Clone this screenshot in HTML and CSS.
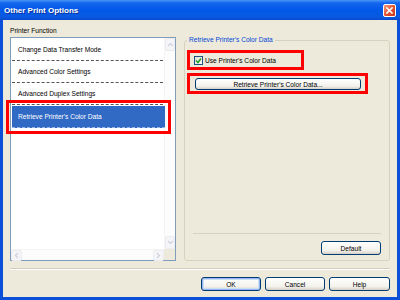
FILE: index.html
```html
<!DOCTYPE html>
<html lang="en">
<head>
    <meta charset="UTF-8">
    <title>Other Print Options</title>
    <link rel="stylesheet" href="styles.css">
</head>
<body>
    <div class="window">
        <div class="titlebar">
            <span class="title">Other Print Options</span>
            <span class="close">
                <svg width="7" height="7" viewBox="0 0 7 7"><path d="M1 1L6 6M6 1L1 6" stroke="#fff" stroke-width="1.6" stroke-linecap="square"/></svg>
            </span>
        </div>

        <div class="content">
            <div class="main">
                <div class="left">
                    <div class="label">Printer Function</div>
                    <div class="listbox">
                        <ul class="items">
                            <li>Change Data Transfer Mode</li>
                            <li>Advanced Color Settings</li>
                            <li>Advanced Duplex Settings</li>
                            <li class="selected">Retrieve Printer's Color Data</li>
                        </ul>
                        <div class="vscroll">
                            <span class="arrow"><svg width="7" height="5" viewBox="0 0 7 5"><path d="M1 4L3.5 1.5L6 4" fill="none" stroke="#cdd2dc" stroke-width="1.2"/></svg></span>
                            <span class="arrow"><svg width="7" height="5" viewBox="0 0 7 5"><path d="M1 1L3.5 3.5L6 1" fill="none" stroke="#cdd2dc" stroke-width="1.2"/></svg></span>
                        </div>
                        <div class="hscroll">
                            <span class="arrow"><svg width="5" height="7" viewBox="0 0 5 7"><path d="M4 1L1.5 3.5L4 6" fill="none" stroke="#cdd2dc" stroke-width="1.2"/></svg></span>
                            <span class="arrow"><svg width="5" height="7" viewBox="0 0 5 7"><path d="M1 1L3.5 3.5L1 6" fill="none" stroke="#cdd2dc" stroke-width="1.2"/></svg></span>
                        </div>
                        <div class="corner"></div>
                    </div>
                </div>

                <fieldset class="group">
                    <legend>Retrieve Printer's Color Data</legend>
                    <div class="mark mark-check">
                        <label class="check">
                            <span class="box">
                                <svg width="7" height="7" viewBox="0 0 7 7"><path d="M1 3.5L3 5.5L6 1.5" fill="none" stroke="#21a121" stroke-width="1.5"/></svg>
                            </span>
                            Use Printer's Color Data
                        </label>
                    </div>
                    <div class="mark mark-button">
                        <button class="btn btn-wide">Retrieve Printer's Color Data...</button>
                    </div>
                    <div class="group-foot">
                        <button class="btn">Default</button>
                    </div>
                </fieldset>
            </div>

            <div class="separator"></div>

            <div class="actions">
                <button class="btn btn-default">OK</button>
                <button class="btn">Cancel</button>
                <button class="btn">Help</button>
            </div>
        </div>
    </div>
</body>
</html>
```

FILE: styles.css
```css
* {
    margin: 0;
    padding: 0;
    box-sizing: border-box;
    font-family: 'Liberation Sans', Arial, sans-serif;
}

body {
    width: 400px;
    height: 300px;
    overflow: hidden;
    background-color: #eeeadb;
}

.window {
    width: 400px;
    height: 300px;
    display: flex;
    flex-direction: column;
    font-size: 6.6px;
    color: #000;
}

/* title bar */
.titlebar {
    height: 20px;
    flex-shrink: 0;
    display: flex;
    align-items: center;
    justify-content: space-between;
    padding: 0 4px 0 4px;
    background: linear-gradient(#4a96f7 0, #1466ee 3px, #0058e8 50%, #0a5ae0 85%, #0848cc 100%);
}

.title {
    color: #fff;
    font-weight: bold;
    font-size: 8px;
    text-shadow: 1px 1px 0 #0b2f9a;
}

.close {
    width: 13px;
    height: 13px;
    border: 1px solid #fff;
    border-radius: 2px;
    background: linear-gradient(135deg, #f39a7c, #e0502f 55%, #c8391d);
    display: flex;
    align-items: center;
    justify-content: center;
}

/* window body */
.content {
    flex: 1;
    display: flex;
    flex-direction: column;
    padding: 5px 7px 0 7px;
    border: 3px solid #0a4fd8;
    border-top: none;
    background-color: #eeeadb;
}

.main {
    display: flex;
    gap: 8px;
}

.left {
    width: 166px;
    display: flex;
    flex-direction: column;
}

.label {
    height: 12px;
    line-height: 12px;
}

/* list box */
.listbox {
    height: 224px;
    border: 1px solid #7f9db9;
    background-color: #fff;
    display: grid;
    grid-template-columns: 1fr 11px;
    grid-template-rows: 1fr 11px;
}

.items {
    list-style: none;
    padding-top: 1px;
}

.items li {
    height: 22px;
    line-height: 21px;
    margin: 0 1px;
    padding-left: 6px;
    border-bottom: 1px dashed #555;
}

.items li.selected {
    position: relative;
    z-index: 1;
    margin-right: -1px;
    background-color: #316ac5;
    color: #fff;
    border-bottom: 1px dashed #9cb4e2;
    margin-top: 1px;
    outline: 3px solid #f00;
    outline-offset: 3px;
}

.vscroll {
    display: flex;
    flex-direction: column;
    justify-content: space-between;
    background-color: #fdfcfc;
    border-left: 1px solid #f6f3f3;
}

.hscroll {
    display: flex;
    justify-content: space-between;
    background-color: #fdfcfc;
    border-top: 1px solid #f6f3f3;
}

.arrow {
    width: 11px;
    height: 11px;
    display: flex;
    align-items: center;
    justify-content: center;
    background-color: #f5f5f8;
    border: 1px solid #eaecf2;
    border-radius: 2px;
}

.vscroll .arrow {
    width: 10px;
    height: 13px;
}

.corner {
    background-color: #eeeadb;
}

/* group box */
.group {
    flex: 1;
    margin-top: 10px;
    border: 1px solid #d5d2c0;
    border-radius: 3px;
    padding: 0 2px 5px 2px;
    display: flex;
    flex-direction: column;
}

.group legend {
    padding: 0 2px;
    line-height: 10px;
    color: #0046d5;
}

.mark {
    border: 3px solid #f00;
}

.mark-check {
    width: 117px;
    height: 20px;
    margin-top: 5px;
    padding: 0 4px;
    display: flex;
    align-items: center;
}

.check {
    display: flex;
    align-items: center;
    gap: 2px;
}

.box {
    width: 9px;
    height: 9px;
    border: 1px solid #1c5180;
    background: linear-gradient(135deg, #dcdcd7, #fff);
    display: flex;
    align-items: center;
    justify-content: center;
}

.mark-button {
    width: 181px;
    height: 21px;
    margin-top: 3px;
    padding: 2px 4px 0 5px;
}

.group-foot {
    margin: auto 6px 0 6px;
    padding-top: 7px;
    border-top: 1px solid #d5d2c0;
    display: flex;
    justify-content: flex-end;
}

/* buttons */
.btn {
    width: 60px;
    height: 14px;
    font-size: 6.6px;
    color: #000;
    border: 1px solid #003c74;
    border-radius: 3px;
    background: linear-gradient(#ffffff, #f3f2ec 70%, #d6d0c5);
    cursor: pointer;
}

.btn-wide {
    width: 166px;
    height: 12px;
}

.btn-default {
    box-shadow: inset 0 0 0 1px #94b6ee, inset 0 0 0 2px #cedcf6;
}

.separator {
    margin-top: 7px;
    height: 2px;
    border-top: 1px solid #d0cdbd;
    border-bottom: 1px solid #fff;
}

.actions {
    margin-top: 7px;
    display: flex;
    justify-content: flex-end;
    gap: 4px;
}

.actions .btn:last-child {
    width: 61px;
}
```
